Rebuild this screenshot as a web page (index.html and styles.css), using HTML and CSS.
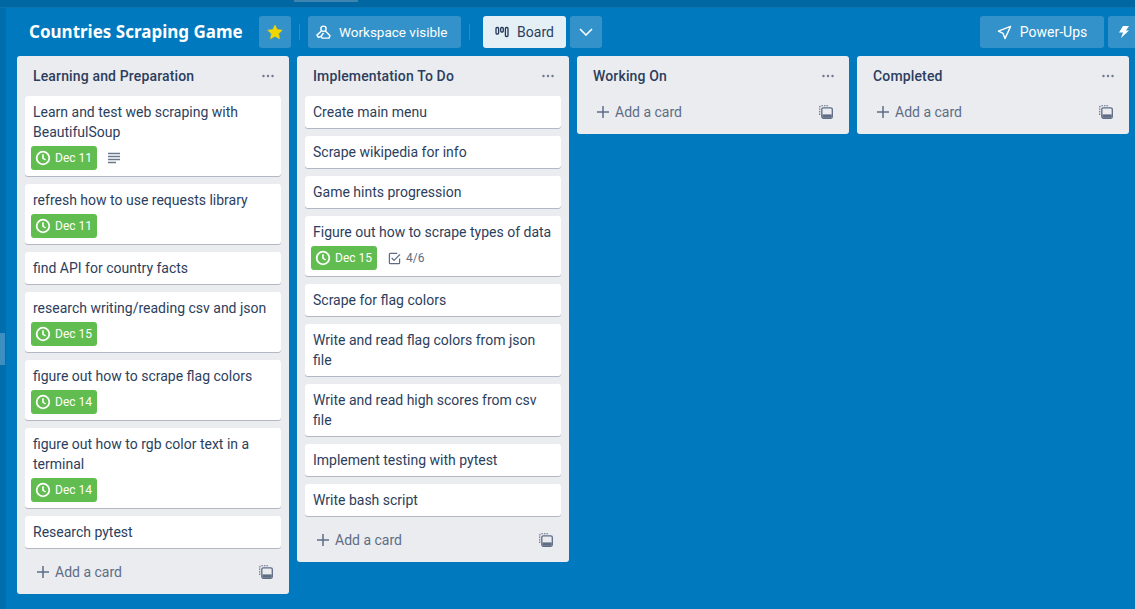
FILE: index.html
```html
<!DOCTYPE html>
<html lang="en">
<head>
    <meta charset="UTF-8">
    <meta name="viewport" content="width=device-width, initial-scale=1.0">
    <title>Countries Scraping Game</title>
    <link rel="stylesheet" href="styles.css">
</head>
<body>
    <svg class="icon-defs" width="0" height="0">
      <symbol id="clock" viewBox="0 0 16 16"><circle cx="8" cy="8" r="6.3" fill="none" stroke="currentColor" stroke-width="1.8"/><path d="M8 4.200v4.200l2.600 1.500" fill="none" stroke="currentColor" stroke-width="1.600"/></symbol>
      <symbol id="cover" viewBox="0 0 14 14"><path d="M.7 10V2.500q0-1.800 1.800-1.800H10" fill="none" stroke="currentColor" stroke-width="1.100" stroke-dasharray="1.500 1"/><rect x="2.800" y="2.800" width="10.500" height="10.500" rx="1.500" fill="none" stroke="currentColor" stroke-width="1.300"/><rect x="3.400" y="9.400" width="9.300" height="3.400" fill="currentColor"/></symbol>
      <symbol id="plus" viewBox="0 0 14 14"><path d="M7 1v12M1 7h12" stroke="currentColor" stroke-width="1.500"/></symbol>
      <symbol id="dots" viewBox="0 0 14 4"><circle cx="2.5" cy="2" r="1.2" fill="currentColor"/><circle cx="7" cy="2" r="1.2" fill="currentColor"/><circle cx="11.500" cy="2" r="1.2" fill="currentColor"/></symbol>
    </svg>

    <div class="top-strip"><span class="top-strip-btn"></span></div>
    <div class="main">
      <div class="sidebar"><span class="sidebar-active"></span></div>
      <div class="board">
        <header class="board-header">
          <h1 class="board-title">Countries Scraping Game</h1>
          <button class="btn btn-square">
            <svg class="star" viewBox="0 0 16 16" width="16" height="16"><path d="M8 1l2.200 4.500 5 .7-3.600 3.500.9 5L8 12.300l-4.500 2.400.9-5L.8 6.200l5-.7z" fill="#f2d600" stroke="#f2d600" stroke-width=".6" stroke-linejoin="round"/></svg>
          </button>
          <span class="divider"></span>
          <button class="btn btn-workspace">
            <svg viewBox="0 0 16 16" width="15" height="15"><circle cx="8" cy="4" r="2.800" fill="none" stroke="#fff" stroke-width="1.500"/><path d="M5.800 6.500L1 10.800l1.500 2.500 3-1.300M10 6.500l5 5-1.200 2.500H6.500l-1-2 2.500-3.500" fill="none" stroke="#fff" stroke-width="1.500" stroke-linejoin="round"/></svg>
            <span>Workspace visible</span>
          </button>
          <span class="divider"></span>
          <button class="btn btn-active">
            <svg viewBox="0 0 14 12" width="14" height="12"><rect x="1" y="1.500" width="2.600" height="6.500" rx="1" fill="none" stroke="#253858" stroke-width="1.300"/><rect x="5.700" y="1.500" width="2.600" height="4.500" rx="1" fill="none" stroke="#253858" stroke-width="1.300"/><rect x="10.400" y="1.500" width="2.600" height="9" rx="1" fill="none" stroke="#253858" stroke-width="1.300"/></svg>
            Board
          </button>
          <button class="btn btn-square">
            <svg viewBox="0 0 14 8" width="14" height="8"><path d="M1 1l6 6 6-6" fill="none" stroke="#fff" stroke-width="1.600"/></svg>
          </button>
          <div class="header-right">
            <button class="btn btn-powerups">
              <svg viewBox="0 0 16 16" width="15" height="15"><path d="M14.500 1.500L1.500 6.500l5 2.500 2 5.500z" fill="none" stroke="#fff" stroke-width="1.500" stroke-linejoin="round"/></svg>
              Power-Ups
            </button>
            <button class="btn btn-bolt">
              <svg viewBox="0 0 10 12" width="10" height="12"><path d="M4 0h6L7 4.500h3L2 12l2-5.500H0z" fill="#fff"/></svg>
            </button>
          </div>
        </header>

        <div class="lists">
          <section class="list">
            <div class="list-head"><h2>Learning and Preparation</h2><svg class="dots" width="14" height="4"><use href="#dots"/></svg></div>
            <div class="card">
              <p>Learn and test web scraping with BeautifulSoup</p>
              <div class="badges">
                <span class="due"><svg width="16" height="16"><use href="#clock"/></svg>Dec 11</span>
                <svg class="desc-icon" viewBox="0 0 14 12" width="14" height="12"><path d="M1 1.500h12M1 4.500h12M1 7.500h12M1 10.500h8" stroke="currentColor" stroke-width="1.300"/></svg>
              </div>
            </div>
            <div class="card">
              <p>refresh how to use requests library</p>
              <div class="badges"><span class="due"><svg width="16" height="16"><use href="#clock"/></svg>Dec 11</span></div>
            </div>
            <div class="card"><p>find API for country facts</p></div>
            <div class="card">
              <p>research writing/reading csv and json</p>
              <div class="badges"><span class="due"><svg width="16" height="16"><use href="#clock"/></svg>Dec 15</span></div>
            </div>
            <div class="card">
              <p>figure out how to scrape flag colors</p>
              <div class="badges"><span class="due"><svg width="16" height="16"><use href="#clock"/></svg>Dec 14</span></div>
            </div>
            <div class="card">
              <p>figure out how to rgb color text in a terminal</p>
              <div class="badges"><span class="due"><svg width="16" height="16"><use href="#clock"/></svg>Dec 14</span></div>
            </div>
            <div class="card"><p>Research pytest</p></div>
            <div class="add-card"><svg class="plus" width="14" height="14"><use href="#plus"/></svg><span>Add a card</span><svg class="cover" width="14" height="14"><use href="#cover"/></svg></div>
          </section>

          <section class="list">
            <div class="list-head"><h2>Implementation To Do</h2><svg class="dots" width="14" height="4"><use href="#dots"/></svg></div>
            <div class="card"><p>Create main menu</p></div>
            <div class="card"><p>Scrape wikipedia for info</p></div>
            <div class="card"><p>Game hints progression</p></div>
            <div class="card">
              <p>Figure out how to scrape types of data</p>
              <div class="badges">
                <span class="due"><svg width="16" height="16"><use href="#clock"/></svg>Dec 15</span>
                <span class="checklist">
                  <svg viewBox="0 0 14 14" width="13" height="13"><path d="M12.500 7v4.500a1 1 0 0 1-1 1h-9a1 1 0 0 1-1-1v-9a1 1 0 0 1 1-1H10" fill="none" stroke="currentColor" stroke-width="1.300"/><path d="M4 6.500l2.500 2.500L13 2.500" fill="none" stroke="currentColor" stroke-width="1.300"/></svg>
                  4/6
                </span>
              </div>
            </div>
            <div class="card"><p>Scrape for flag colors</p></div>
            <div class="card"><p>Write and read flag colors from json file</p></div>
            <div class="card"><p>Write and read high scores from csv file</p></div>
            <div class="card"><p>Implement testing with pytest</p></div>
            <div class="card"><p>Write bash script</p></div>
            <div class="add-card"><svg class="plus" width="14" height="14"><use href="#plus"/></svg><span>Add a card</span><svg class="cover" width="14" height="14"><use href="#cover"/></svg></div>
          </section>

          <section class="list">
            <div class="list-head"><h2>Working On</h2><svg class="dots" width="14" height="4"><use href="#dots"/></svg></div>
            <div class="add-card"><svg class="plus" width="14" height="14"><use href="#plus"/></svg><span>Add a card</span><svg class="cover" width="14" height="14"><use href="#cover"/></svg></div>
          </section>

          <section class="list">
            <div class="list-head"><h2>Completed</h2><svg class="dots" width="14" height="4"><use href="#dots"/></svg></div>
            <div class="add-card"><svg class="plus" width="14" height="14"><use href="#plus"/></svg><span>Add a card</span><svg class="cover" width="14" height="14"><use href="#cover"/></svg></div>
          </section>
        </div>
      </div>
    </div>
</body>
</html>
```

FILE: styles.css
```css
* {
  box-sizing: border-box;
}

html,
body {
  height: 100%;
}

body {
  margin: 0;
  overflow: hidden;
  display: flex;
  flex-direction: column;
  background-color: #0079bf;
  color: #2c3e5d;
  font-family: Roboto, "Noto Sans", sans-serif;
  font-size: 14px;
  line-height: 20px;
}

.icon-defs {
  position: absolute;
}

.top-strip {
  height: 8px;
  flex-shrink: 0;
  padding-left: 294px;
  background-color: #0067a3;
  border-bottom: 1px solid #0a74b2;
}

.top-strip-btn {
  display: block;
  width: 64px;
  height: 2px;
  background-color: #3d85b0;
}

.main {
  flex: 1;
  display: flex;
  min-height: 0;
}

.sidebar {
  width: 6px;
  flex-shrink: 0;
  padding-top: 325px;
  background-color: #006ead;
}

.sidebar-active {
  display: block;
  width: 5px;
  height: 32px;
  background-color: #3d8fc2;
}

.board {
  flex: 1;
  min-width: 0;
  overflow: hidden;
  padding: 8px 0 0 11px;
}

.board-header {
  display: flex;
  align-items: center;
  gap: 4px;
  height: 32px;
  margin-bottom: 8px;
}

.board-title {
  width: 226px;
  margin: 0 0 0 12px;
  font-family: "Noto Sans", sans-serif;
  font-size: 17px;
  font-weight: 700;
  color: #fff;
  white-space: nowrap;
}

.btn {
  display: flex;
  align-items: center;
  justify-content: center;
  gap: 8px;
  height: 32px;
  padding: 0 8px;
  border: none;
  border-radius: 3px;
  background-color: #3392c9;
  color: #fff;
  font: inherit;
  white-space: nowrap;
}

.btn-square {
  width: 32px;
  padding: 0;
}

.btn-workspace {
  width: 153px;
  justify-content: flex-start;
  font-size: 13.5px;
}

.btn-active {
  width: 83px;
  margin-left: 5px;
  background-color: #e4f0f6;
  color: #2c3e5d;
}

.divider {
  width: 1px;
  height: 16px;
  margin: 0 4px;
  background-color: #2a8cc5;
}

.header-right {
  margin-left: auto;
  display: flex;
  gap: 4px;
  width: 155px;
  flex-shrink: 0;
}

.btn-powerups {
  width: 124px;
  flex-shrink: 0;
}

.btn-bolt {
  width: 32px;
  flex-shrink: 0;
}

.lists {
  display: flex;
  align-items: flex-start;
  gap: 8px;
}

.list {
  width: 272px;
  flex-shrink: 0;
  padding: 0 8px 6px;
  background-color: #ebecf0;
  border-radius: 3px;
}

.list-head {
  display: flex;
  align-items: center;
  justify-content: space-between;
  height: 40px;
  padding: 0 6px 0 8px;
}

.list-head h2 {
  margin: 0;
  font-size: 14px;
  font-weight: 500;
  letter-spacing: 0.15px;
}

.dots {
  color: #6b778c;
}

.card {
  margin-bottom: 8px;
  padding: 6px 8px;
  background-color: #fff;
  border-radius: 3px;
  box-shadow: 0 1px 0 #091e4240;
}

.card p {
  margin: 0;
}

.badges {
  display: flex;
  align-items: center;
  margin: 4px 0 0 -2px;
}

.due {
  display: flex;
  align-items: center;
  gap: 4px;
  height: 24px;
  padding: 0 5px 0 4px;
  background-color: #61bd4f;
  border-radius: 3px;
  color: #fff;
  font-size: 12px;
}

.desc-icon {
  margin-left: 10px;
  color: #6b778c;
}

.checklist {
  display: flex;
  align-items: center;
  gap: 5px;
  margin-left: 11px;
  color: #5e6c84;
  font-size: 12px;
}

.add-card {
  display: flex;
  align-items: center;
  height: 32px;
  padding: 0 8px 0 11px;
  color: #5e6c84;
}

.plus {
  margin-right: 5px;
}

.cover {
  margin-left: auto;
}
```
